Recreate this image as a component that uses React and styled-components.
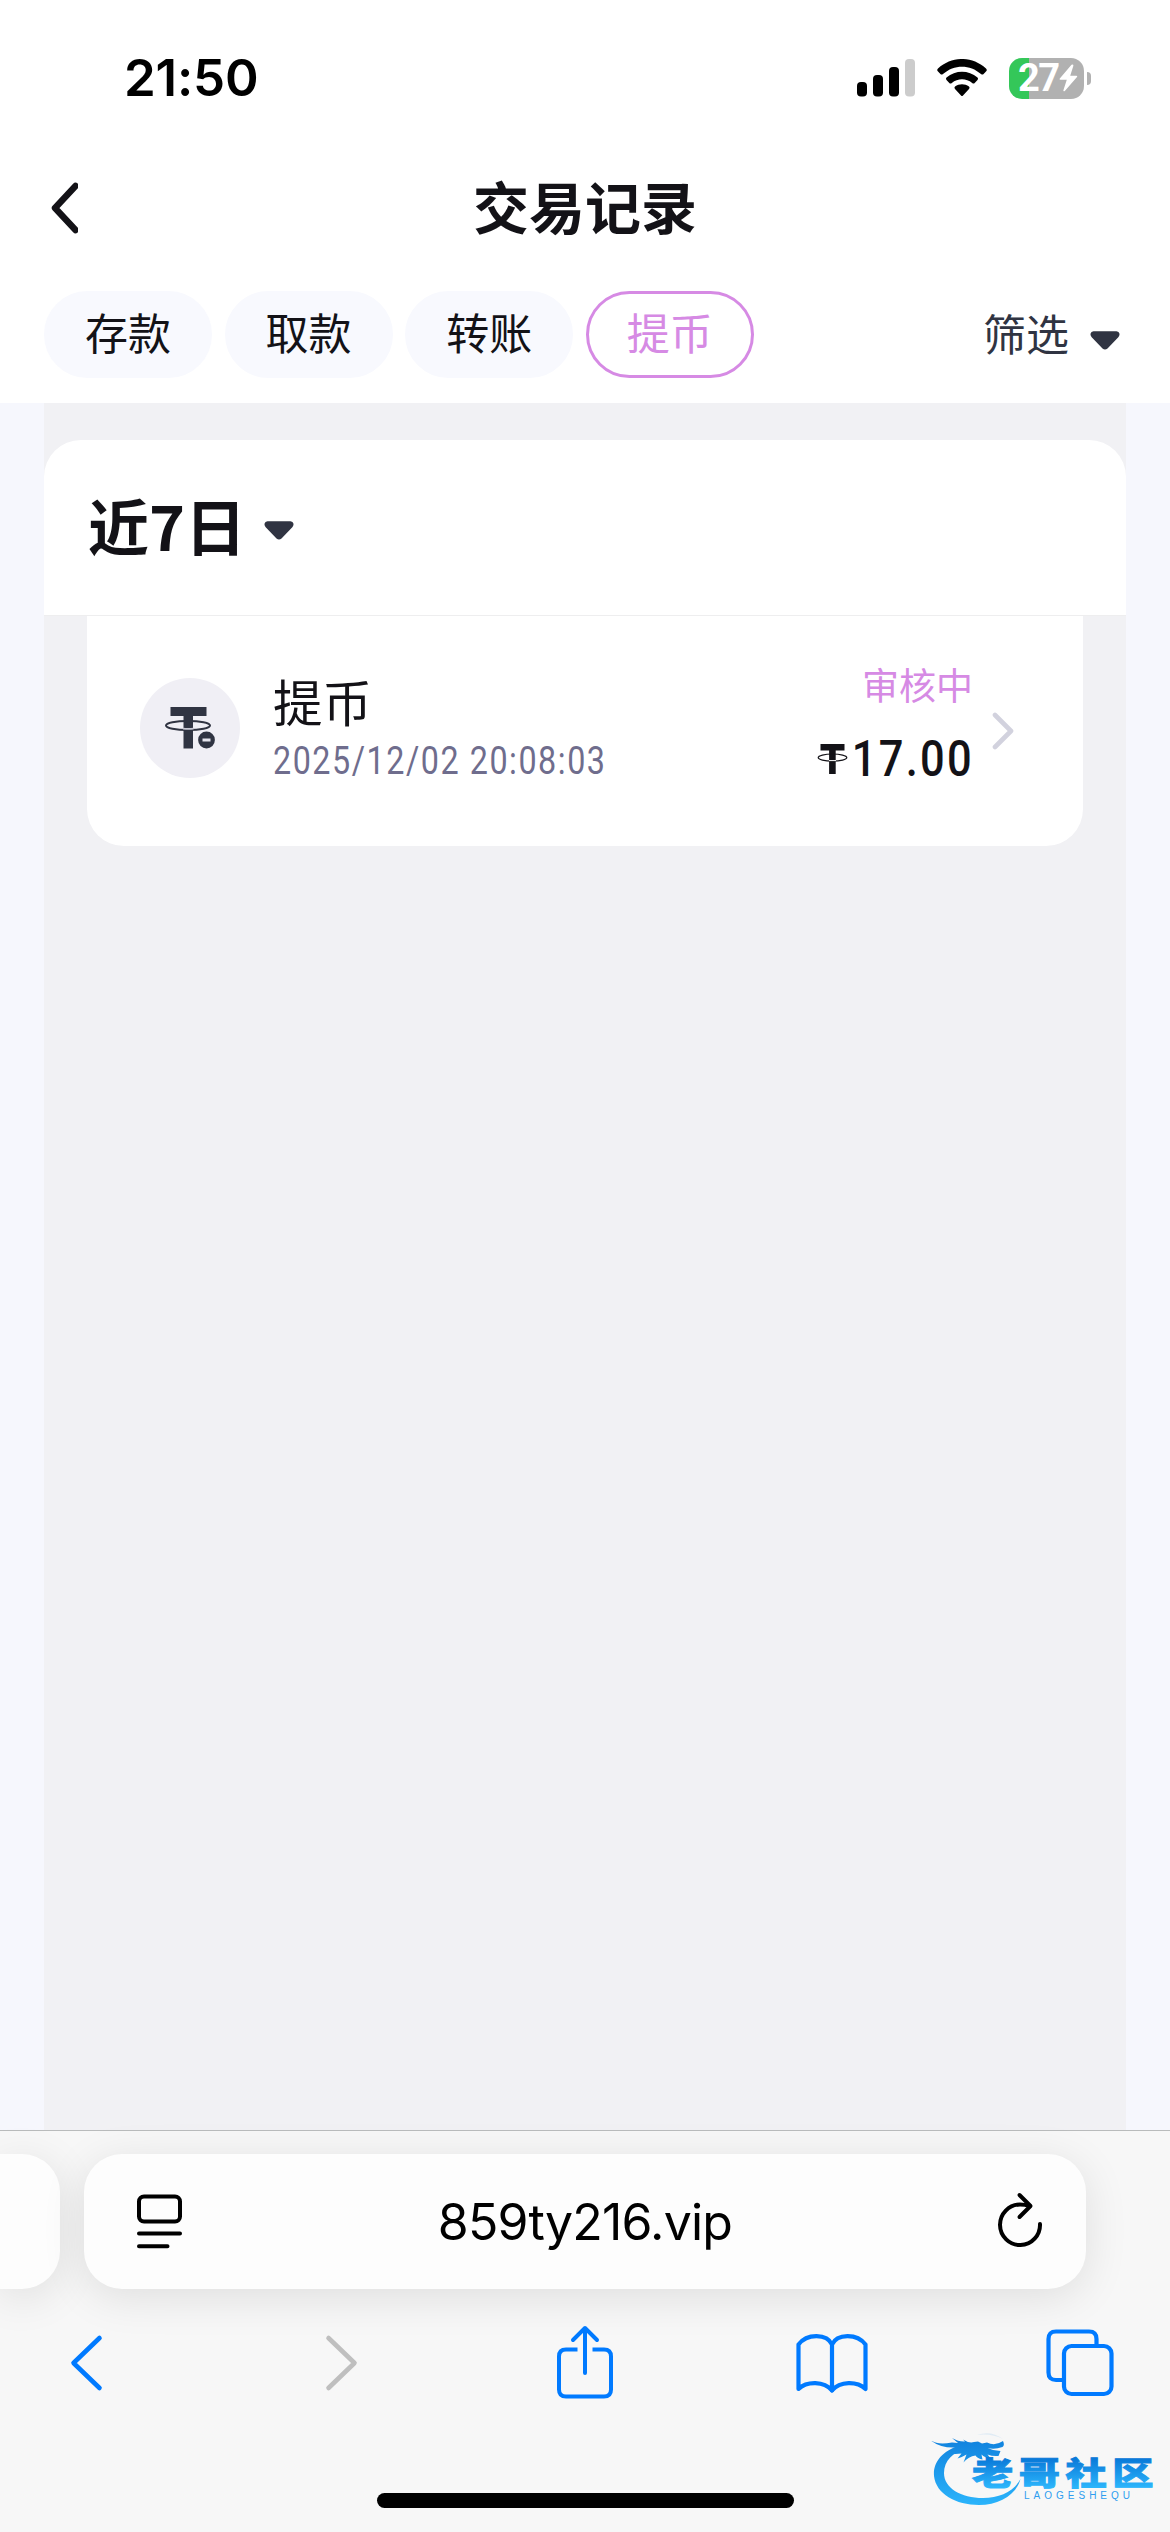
import React from "react";
import styled, { createGlobalStyle } from "styled-components";

const GlobalStyle = createGlobalStyle`
  * {
    box-sizing: border-box;
  }
  body {
    margin: 0;
    background: #ffffff;
    font-family: "Noto Sans CJK SC", sans-serif;
  }
  button {
    margin: 0;
    padding: 0;
    border: 0;
    background: none;
    font: inherit;
    color: inherit;
  }
  svg {
    display: block;
    flex: none;
  }
`;

const Screen = styled.div`
  position: relative;
  width: 1170px;
  height: 2532px;
  display: flex;
  flex-direction: column;
  overflow: hidden;
  background: #f6f7fd;
`;

const Header = styled.header`
  height: 403px;
  background: #ffffff;
`;

const StatusBar = styled.div`
  height: 156px;
  padding: 0 79px 0 124px;
  display: flex;
  align-items: center;
  justify-content: space-between;
`;

const Clock = styled.span`
  font-family: Inter, sans-serif;
  font-size: 51px;
  font-weight: 600;
  line-height: 60px;
  letter-spacing: -0.2px;
  color: #000000;
`;

const StatusIcons = styled.div`
  display: flex;
  align-items: center;
  gap: 22px;
`;

const BatteryWrap = styled.div`
  display: flex;
  align-items: center;
  gap: 3px;
`;

const Battery = styled.div`
  width: 75px;
  height: 41px;
  padding-left: 9px;
  border-radius: 13px;
  display: flex;
  align-items: center;
  gap: 1px;
  background: linear-gradient(90deg, #34c759 20px, #b1b1b1 20px);
`;

const BatteryLevel = styled.span`
  width: 40px;
  font-family: Roboto, sans-serif;
  font-size: 38px;
  font-weight: 700;
  line-height: 41px;
  letter-spacing: -1.6px;
  color: #ffffff;
`;

const BatteryTip = styled.div`
  width: 4px;
  height: 13px;
  border-radius: 0 4px 4px 0;
  background: #b1b1b1;
`;

const TitleBar = styled.div`
  height: 104px;
  padding: 0 51px;
  display: grid;
  grid-template-columns: 28px 1fr 28px;
  align-items: center;
`;

const Title = styled.h1`
  margin: -6px 0 0;
  font-size: 56px;
  font-weight: 700;
  line-height: 80px;
  text-align: center;
  color: #131217;
`;

const FilterBar = styled.div`
  margin-top: 31px;
  padding: 0 50px 0 44px;
  display: flex;
  align-items: center;
  justify-content: space-between;
`;

const Tabs = styled.div`
  display: flex;
  gap: 12.6px;
`;

const Tab = styled.button`
  width: 168px;
  height: 87px;
  padding-bottom: 6px;
  border-radius: 44px;
  border: 3px solid ${({ $active }) => ($active ? "#d68ae4" : "#f8f9fe")};
  background: ${({ $active }) => ($active ? "#ffffff" : "#f8f9fe")};
  color: ${({ $active }) => ($active ? "#d68ae4" : "#131217")};
  font-size: 43px;
  line-height: 75px;
`;

const FilterButton = styled.button`
  display: flex;
  align-items: center;
  gap: 21px;
  padding-bottom: 6px;
  font-size: 43px;
  line-height: 80px;
  color: #303442;
  svg {
    margin-top: 18px;
  }
`;

const Content = styled.main`
  flex: 1;
  margin: 0 44px;
  padding-top: 37px;
  background: #f1f1f4;
`;

const RangeCard = styled.section`
  height: 176px;
  padding: 0 44px;
  display: flex;
  align-items: center;
  gap: 18px;
  border-bottom: 1px solid #eeeeef;
  border-radius: 37px 37px 0 0;
  background: #ffffff;
  svg {
    margin-top: 5px;
  }
`;

const RangeLabel = styled.h2`
  margin: -5px 0 0;
  font-size: 61px;
  font-weight: 700;
  line-height: 90px;
  color: #131217;
`;

const RecordCard = styled.section`
  height: 230px;
  margin: 0 43px;
  padding: 0 69px 0 53px;
  display: flex;
  align-items: center;
  border-radius: 0 0 37px 37px;
  background: #ffffff;
`;

const CoinBadge = styled.div`
  width: 100px;
  height: 100px;
  margin-top: -7px;
  border-radius: 50%;
  background: #f0eff5;
`;

const RecordInfo = styled.div`
  flex: 1;
  margin: 2px 0 0 33px;
  display: flex;
  flex-direction: column;
`;

const RecordName = styled.span`
  font-size: 49.5px;
  line-height: 58px;
  color: #131217;
`;

// narrow numerals: Roboto squeezed to the width of a DIN face
const RecordTime = styled.span`
  font-family: Roboto, sans-serif;
  font-size: 38px;
  line-height: 62px;
  letter-spacing: 1.8px;
  white-space: nowrap;
  transform: scaleX(0.85);
  transform-origin: left center;
  color: #6f6d8d;
`;

const RecordResult = styled.div`
  margin: -16px 19px 0 0;
  display: flex;
  flex-direction: column;
  align-items: flex-end;
`;

const Status = styled.span`
  font-size: 37px;
  line-height: 54px;
  color: #d68ae4;
`;

const Amount = styled.span`
  margin-top: 18px;
  display: flex;
  align-items: center;
  color: #131217;
`;

const AmountValue = styled.span`
  margin: 0 -1px 0 -16px;
  font-family: Roboto, sans-serif;
  font-size: 50.5px;
  font-weight: 500;
  line-height: 60px;
  letter-spacing: 2.6px;
  transform: scaleX(0.86);
  transform-origin: right center;
`;

const Browser = styled.footer`
  height: 402px;
  padding-top: 23px;
  display: flex;
  flex-direction: column;
  border-top: 1px solid #b9bbbc;
  background: #f7f7f7;
`;

const AddressRow = styled.div`
  height: 135px;
  display: flex;
  gap: 24px;
`;

const PreviousTab = styled.div`
  width: 60px;
  border-radius: 0 38px 38px 0;
  background: #fdfdfd;
  box-shadow: 0 8px 44px rgba(0, 0, 0, 0.1);
`;

const AddressBar = styled.div`
  width: 1002px;
  padding: 0 43px 0 52px;
  display: flex;
  align-items: center;
  justify-content: space-between;
  border-radius: 38px;
  background: #fdfdfd;
  box-shadow: 0 8px 44px rgba(0, 0, 0, 0.1);
`;

const Host = styled.span`
  margin-left: -10px;
  font-family: Inter, sans-serif;
  font-size: 50px;
  line-height: 64px;
  letter-spacing: -0.8px;
  color: #000000;
`;

const Toolbar = styled.nav`
  height: 84px;
  margin-top: 32px;
  padding: 0 40px 0 36px;
  display: flex;
  align-items: center;
  justify-content: space-between;
  color: #007aff;
`;

const ToolButton = styled.button`
  width: 100px;
  display: flex;
  justify-content: center;
`;

const HomeIndicator = styled.div`
  width: 417px;
  height: 15px;
  margin: 88px auto 0;
  border-radius: 8px;
  background: #000000;
`;

// sits over the browser bar, in the corner of the screen
const Watermark = styled.div`
  position: absolute;
  left: 925px;
  top: 2425px;
`;

const SignalIcon = () => (
  <svg width="58" height="38" viewBox="0 0 58 38">
    <rect x="0" y="23" width="10" height="14.5" rx="4" />
    <rect x="16" y="16" width="10" height="21.5" rx="4" />
    <rect x="32" y="8" width="10" height="29.5" rx="4" />
    <rect x="48" y="0" width="10" height="37.5" rx="4" fill="#cccccc" />
  </svg>
);

const WifiIcon = () => (
  <svg width="50" height="38" viewBox="0 0 50 38">
    <path d="M1 9.5C15-3.2 35-3.2 49 9.5q1.4 1.4.2 2.8L46.6 15q-1.2 1.2-2.6 0C33 5.2 17 5.2 6 15q-1.4 1.2-2.6 0L.8 12.3Q-.4 10.9 1 9.5z" />
    <path d="M9.5 18.5c9-7.8 22-7.8 31 0q1.2 1.2 0 2.5l-2.8 2.9q-1.2 1.2-2.5 0c-6-5-14.4-5-20.4 0q-1.3 1.2-2.5 0L9.5 21q-1.2-1.3 0-2.5z" />
    <path d="M18 27.6c4.2-3.2 9.8-3.2 14 0q1.2 1.1 0 2.4l-6 6.6q-1 1-2 0L18 30q-1.2-1.3 0-2.4z" />
  </svg>
);

const BoltIcon = () => (
  <svg width="19" height="28" viewBox="0 0 19 28" fill="#ffffff">
    <path d="M12.5.8L.8 14.6q-.8 1.2.6 1.2h6.4L4.4 26.2q-.2 1.8 1.4.8L18 13q.8-1.2-.6-1.2h-6.2L14.4 1.8q0-2-1.9-1z" />
  </svg>
);

const BackIcon = () => (
  <svg width="27" height="52" viewBox="0 0 27 52" fill="none" stroke="#131217" strokeWidth="6.5" strokeLinecap="round" strokeLinejoin="round">
    <path d="M24.5 4L4 26l20.5 22" />
  </svg>
);

const CaretIcon = () => (
  <svg width="30" height="19" viewBox="0 0 30 19" fill="#303442">
    <path d="M3.5.3h23q2.5 0 3 2.5.2 2-1.2 3.5L17.5 17.5q-2.5 2.2-5 0L1.7 6.3Q.3 4.8.5 2.8q.5-2.5 3-2.5z" />
  </svg>
);

const CoinIcon = () => (
  <svg width="100" height="100" viewBox="0 0 100 100">
    <path d="M30.5 29h36v9H53v32.5h-9.5V38h-13z" fill="#303442" />
    <ellipse cx="48" cy="47.5" rx="22" ry="4.6" fill="none" stroke="#303442" strokeWidth="2" />
    <path d="M43 50.6q5.5.5 10.500 0" stroke="#c6c6d2" strokeWidth="1.8" fill="none" />
    <circle cx="66.5" cy="62" r="8.4" fill="#303442" />
    <rect x="62.5" y="60.5" width="8" height="3" fill="#e6e6ee" />
  </svg>
);

const TetherIcon = () => (
  <svg width="31" height="32" viewBox="0 0 31 32" fill="#131217">
    <path d="M3.5 1h24v6.6h-8.8V31h-6.6V7.6H3.5z" />
    <ellipse cx="15.5" cy="14.6" rx="14.3" ry="3.6" fill="none" stroke="#131217" strokeWidth="1.2" />
    <path d="M12 17.6h7" stroke="#ffffff" strokeWidth="1" />
  </svg>
);

const NextIcon = () => (
  <svg width="22" height="38" viewBox="0 0 22 38" fill="none" stroke="#d2d2de" strokeWidth="4.6" strokeLinecap="round" strokeLinejoin="round">
    <path d="M3 3l16 16L3 35" />
  </svg>
);

const ReaderIcon = () => (
  <svg width="47" height="56" viewBox="0 0 47 56" fill="none" stroke="#000000" strokeWidth="4" strokeLinecap="round">
    <rect x="3" y="2.5" width="41" height="25" rx="5" />
    <path d="M3 39.5h41M3 52.3h28.5" />
  </svg>
);

const ReloadIcon = () => (
  <svg width="46" height="60" viewBox="0 0 46 60" fill="none" stroke="#000000" strokeWidth="4" strokeLinecap="round" strokeLinejoin="round">
    <path d="M43 32A20 20.3 0 1 1 23 12.5q5 0 9.5 1.5" />
    <path d="M22.5 3l11 11-11 11" />
  </svg>
);

const BrowserBackIcon = () => (
  <svg width="35" height="58" viewBox="0 0 35 58" fill="none" stroke="currentColor" strokeWidth="4.6" strokeLinecap="round" strokeLinejoin="round">
    <path d="M30.5 4L4.5 29l26 25" />
  </svg>
);

const BrowserForwardIcon = () => (
  <svg width="49" height="58" viewBox="-14 0 49 58" fill="none" stroke="#bfbfbf" strokeWidth="4.6" strokeLinecap="round" strokeLinejoin="round">
    <path d="M4.5 4l26 25-26 25" />
  </svg>
);

const ShareIcon = () => (
  <svg width="64" height="76" viewBox="-4 0 64 76" fill="none" stroke="currentColor" strokeWidth="4" strokeLinejoin="round">
    <path d="M22.5 24.5H11q-7 0-7 7v33q0 7 7 7h38q7 0 7-7v-33q0-7-7-7H37.5" />
    <path d="M18 15L30 3l12 12M30 3v45" strokeLinecap="round" />
  </svg>
);

const BookIcon = () => (
  <svg width="74" height="62" viewBox="0 0 74 62" fill="none" stroke="currentColor" strokeWidth="4.2" strokeLinecap="round" strokeLinejoin="round">
    <path d="M37 12.5C32 1.5 12 1 3.5 12.5V57C12 49 29 49 37 58.5 45 49 62 49 70.5 57V12.5C62 1 42 1.5 37 12.5z" />
    <path d="M37 12.5v46" />
  </svg>
);

const TabsIcon = () => (
  <svg width="70" height="68" viewBox="0 0 70 68" fill="none" stroke="currentColor" strokeWidth="4.2">
    <path d="M19 51h-8q-7.5 0-7.5-7.5V10Q3.5 2.5 11 2.5h33q7.5 0 7.5 7.5v7" />
    <rect x="19" y="17" width="47.5" height="48" rx="7.5" />
  </svg>
);

const WatermarkLogo = () => (
  <svg width="235" height="88" viewBox="0 0 235 88">
    <defs>
      <linearGradient id="ring" x1="0" y1="10" x2="0" y2="80" gradientUnits="userSpaceOnUse">
        <stop offset="0" stopColor="#0f7fdc" />
        <stop offset="1" stopColor="#2bb4fb" />
      </linearGradient>
      <linearGradient id="name" x1="0" y1="-26" x2="0" y2="2" gradientUnits="userSpaceOnUse">
        <stop offset="0" stopColor="#0a7ad9" />
        <stop offset="1" stopColor="#2bb4fb" />
      </linearGradient>
    </defs>
    <g fill="url(#ring)">
      <path d="M36 20C16 26 8 38 9 51c2 18 22 29 45 29 20 0 37-10 41.5-26C89 66 75 73 58 73 36 73 19 63 19 48c0-12 9-21 23-25z" />
      <path d="M7 16q6 4 20 1.5l6 .5-6-5q7 4 13 3.5l-2-2q6 4 11 2.5l4-.5 4 2 5-1q8 4 16-1.5 2 4-.5 6-8 3-15 1 6 3 13 3l-2 5q-6 .5-11-1.5l4 5q-7-2-10-5l1 5q-5-1-7-4-7 1-12 7l3-8q-5 3-9 4l4-5-12 1 7-7q-15 1-25-6.5z" />
      <path d="M52 10q14-5 26 4-12-6-26-4z" opacity=".1" />
    </g>
    <g transform="translate(47 60) scale(1.31 1)">
      <text x="0" y="0" fontFamily="'Liberation Sans', 'Noto Sans CJK SC', sans-serif" fontSize="31.5" fontWeight="900" letterSpacing="4.2" fill="url(#name)" stroke="url(#name)" strokeWidth=".9">
        老哥社区
      </text>
    </g>
    <text x="99" y="74" fontFamily="'Liberation Sans', sans-serif" fontSize="10" letterSpacing="4" fill="#2d9df0">
      LAOGESHEQU
    </text>
  </svg>
);

const tabs = ["存款", "取款", "转账", "提币"];

function App() {
  return (
    <Screen>
      <GlobalStyle />
      <Header>
        <StatusBar>
          <Clock>21:50</Clock>
          <StatusIcons>
            <SignalIcon />
            <WifiIcon />
            <BatteryWrap>
              <Battery>
                <BatteryLevel>27</BatteryLevel>
                <BoltIcon />
              </Battery>
              <BatteryTip />
            </BatteryWrap>
          </StatusIcons>
        </StatusBar>
        <TitleBar>
          <BackIcon />
          <Title>交易记录</Title>
        </TitleBar>
        <FilterBar>
          <Tabs>
            {tabs.map((tab) => (
              <Tab key={tab} $active={tab === "提币"}>
                {tab}
              </Tab>
            ))}
          </Tabs>
          <FilterButton>
            筛选
            <CaretIcon />
          </FilterButton>
        </FilterBar>
      </Header>

      <Content>
        <RangeCard>
          <RangeLabel>近7日</RangeLabel>
          <CaretIcon />
        </RangeCard>
        <RecordCard>
          <CoinBadge>
            <CoinIcon />
          </CoinBadge>
          <RecordInfo>
            <RecordName>提币</RecordName>
            <RecordTime>2025/12/02 20:08:03</RecordTime>
          </RecordInfo>
          <RecordResult>
            <Status>审核中</Status>
            <Amount>
              <TetherIcon />
              <AmountValue>17.00</AmountValue>
            </Amount>
          </RecordResult>
          <NextIcon />
        </RecordCard>
      </Content>

      <Browser>
        <AddressRow>
          <PreviousTab />
          <AddressBar>
            <ReaderIcon />
            <Host>859ty216.vip</Host>
            <ReloadIcon />
          </AddressBar>
        </AddressRow>
        <Toolbar>
          <ToolButton>
            <BrowserBackIcon />
          </ToolButton>
          <ToolButton>
            <BrowserForwardIcon />
          </ToolButton>
          <ToolButton>
            <ShareIcon />
          </ToolButton>
          <ToolButton>
            <BookIcon />
          </ToolButton>
          <ToolButton>
            <TabsIcon />
          </ToolButton>
        </Toolbar>
        <HomeIndicator />
      </Browser>

      <Watermark>
        <WatermarkLogo />
      </Watermark>
    </Screen>
  );
}

export default App;
